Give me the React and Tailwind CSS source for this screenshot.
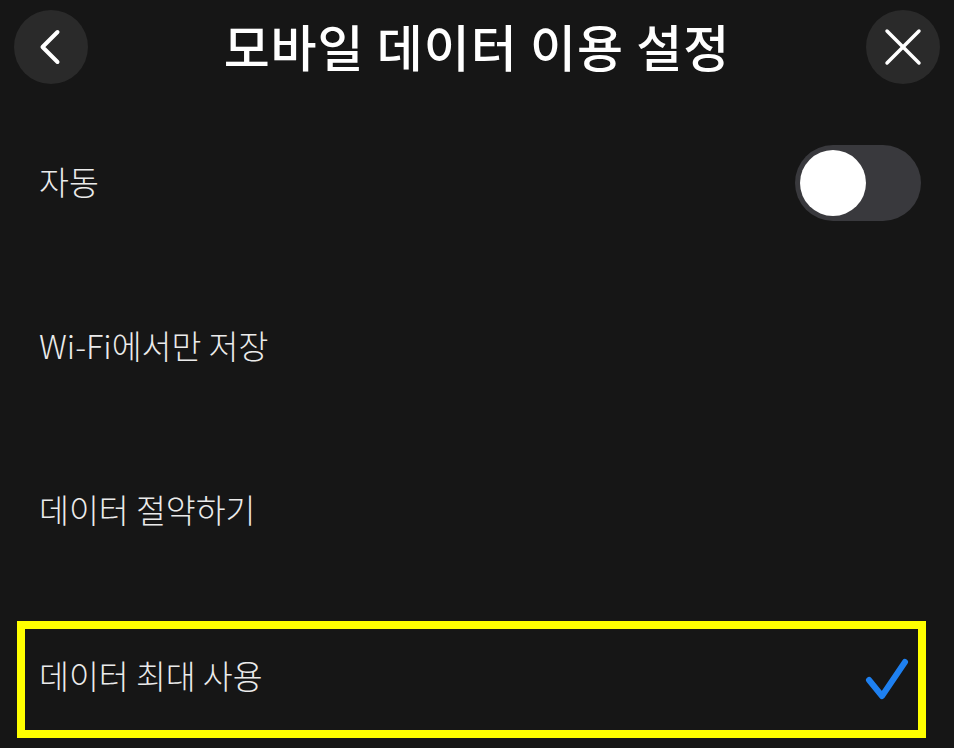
import { ChevronLeft, X } from 'lucide-react';

const font = { fontFamily: '"Noto Sans CJK KR", "Noto Sans", sans-serif' };

function Toggle() {
    return (
        <div className="w-[126px] h-[76px] rounded-full bg-[#39393d] p-[5px] flex items-center">
            <div className="w-[66px] h-[66px] rounded-full bg-white" />
        </div>
    );
}

function Row({ label, children }) {
    return (
        <div className="h-[164px] flex items-center justify-between pl-[39px] pr-[33px]">
            <span className="text-[32.5px] font-light text-[#ebebeb] -mt-[4px]">{label}</span>
            {children}
        </div>
    );
}

export default function App() {
    return (
        <div className="w-[954px] h-[748px] bg-[#161616] overflow-hidden" style={font}>
            <div className="h-[101px] flex items-center justify-between px-[14px] pb-[7px]">
                <button className="w-[74px] h-[74px] rounded-full bg-[#2a2a2a] flex items-center justify-center text-white">
                    <ChevronLeft size={60} strokeWidth={1.6} className="-ml-[3px]" />
                </button>
                <h1 className="text-[50px] font-medium text-white tracking-[1px] -mt-[4px]">모바일 데이터 이용 설정</h1>
                <button className="w-[74px] h-[74px] rounded-full bg-[#2a2a2a] flex items-center justify-center text-white">
                    <X size={64} strokeWidth={1.3} />
                </button>
            </div>

            <Row label="자동">
                <Toggle />
            </Row>
            <Row label="Wi-Fi에서만 저장" />
            <Row label="데이터 절약하기" />

            <div className="pt-[28px] pl-[17px] pr-[28px]">
                <div className="h-[117px] border-[8px] border-[#ffff00] flex items-center justify-between pl-[14px] pr-[8px]">
                    <span className="text-[32.5px] font-light text-[#ebebeb] -mt-[8px]">데이터 최대 사용</span>
                    <svg width="46" height="46" viewBox="0 0 46 46" fill="none">
                        <path d="M5 23 L18 39 L41 5" stroke="#1e80f0" strokeWidth="6" strokeLinecap="round" strokeLinejoin="round" />
                    </svg>
                </div>
            </div>
        </div>
    );
}
